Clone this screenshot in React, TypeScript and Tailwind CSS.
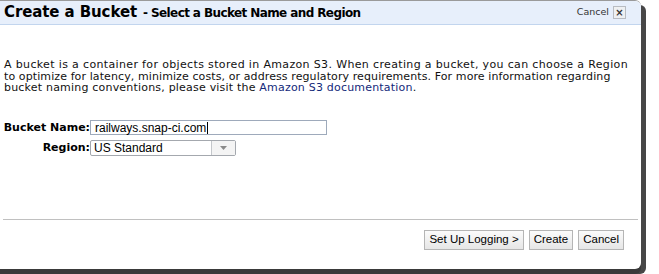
import React from 'react';

export default function App() {
  return (
    <div className="w-[659px] h-[274px] bg-white overflow-hidden">
      <div className="w-[641px] h-[269px] bg-white border-t border-[#9a9a9a] rounded-tr-[6px] rounded-br-[6px] flex flex-col shadow-[0_5px_0_#3a3a3a,5px_5px_0_#474747] font-['DejaVu_Sans',Verdana,sans-serif] text-black">
        {/* header */}
        <div className="h-[24px] bg-[#e7effb] border-b border-[#c2d5ee] rounded-tr-[6px] flex items-center justify-between pl-[4px] pr-[15px]">
          <div className="flex items-baseline gap-[6px] font-bold">
            <span className="text-[15px] tracking-[-0.1px]">Create a Bucket</span>
            <span className="text-[12px] tracking-[-0.6px]">- Select a Bucket Name and Region</span>
          </div>
          <div className="flex items-center gap-[4px]">
            <span className="text-[9.5px] text-[#333]">Cancel</span>
            <span className="w-[13px] h-[13px] bg-[#eef0f2] border border-[#b8bcc2] flex items-center justify-center text-[10px] leading-none font-bold text-[#333]">
              ×
            </span>
          </div>
        </div>

        {/* description */}
        <p className="mt-[34px] px-[4px] text-[11px] leading-[11.5px] text-[#111] whitespace-nowrap">
          <span className="tracking-[0.35px]">
            A bucket is a container for objects stored in Amazon S3. When creating a bucket, you can choose a Region
          </span>
          <br />
          <span className="tracking-[0.1px]">
            to optimize for latency, minimize costs, or address regulatory requirements. For more information regarding
          </span>
          <br />
          <span className="tracking-[0.2px]">
            bucket naming conventions, please visit the <span className="text-[#13297a]">Amazon S3 documentation</span>.
          </span>
        </p>

        {/* form */}
        <div className="mt-[26px] grid grid-cols-[90px_auto] gap-y-[4px] items-center text-[11px]">
          <label className="font-bold text-right">Bucket Name:</label>
          <div className="w-[237px] h-[15px] border border-[#9eaabb] bg-white flex items-center pl-[4px] font-['Liberation_Sans',Arial,sans-serif] text-[12px]">
            railways.snap-ci.com<span className="w-px h-[12px] bg-black ml-px" />
          </div>
          <label className="font-bold text-right">Region:</label>
          <div className="w-[146px] h-[16px] border border-[#a4a8ae] rounded-[2px] bg-white flex items-stretch font-['Liberation_Sans',Arial,sans-serif] text-[12px]">
            <span className="flex-1 pl-[3px] flex items-center">US Standard</span>
            <span className="w-[24px] border-l border-[#c4c7cb] bg-[#f4f4f4] flex items-center justify-center">
              <svg width="7" height="4" viewBox="0 0 7 4"><path d="M0 0h7L3.5 4z" fill="#8a8a8a" /></svg>
            </span>
          </div>
        </div>

        <div className="flex-1" />

        {/* footer */}
        <div className="mx-[3px] border-t border-[#c0c0c0]" />
        <div className="h-[49px] flex items-start justify-end gap-[5px] pt-[10px] pr-[17px] font-['Liberation_Sans',Arial,sans-serif] text-[11.5px]">
          {['Set Up Logging >', 'Create', 'Cancel'].map((label) => (
            <button
              key={label}
              className="h-[20px] px-[4px] border border-[#b5b5b5] bg-gradient-to-b from-[#fbfbfb] to-[#e6e6e6] text-black leading-none"
            >
              {label}
            </button>
          ))}
        </div>
      </div>
    </div>
  );
}
